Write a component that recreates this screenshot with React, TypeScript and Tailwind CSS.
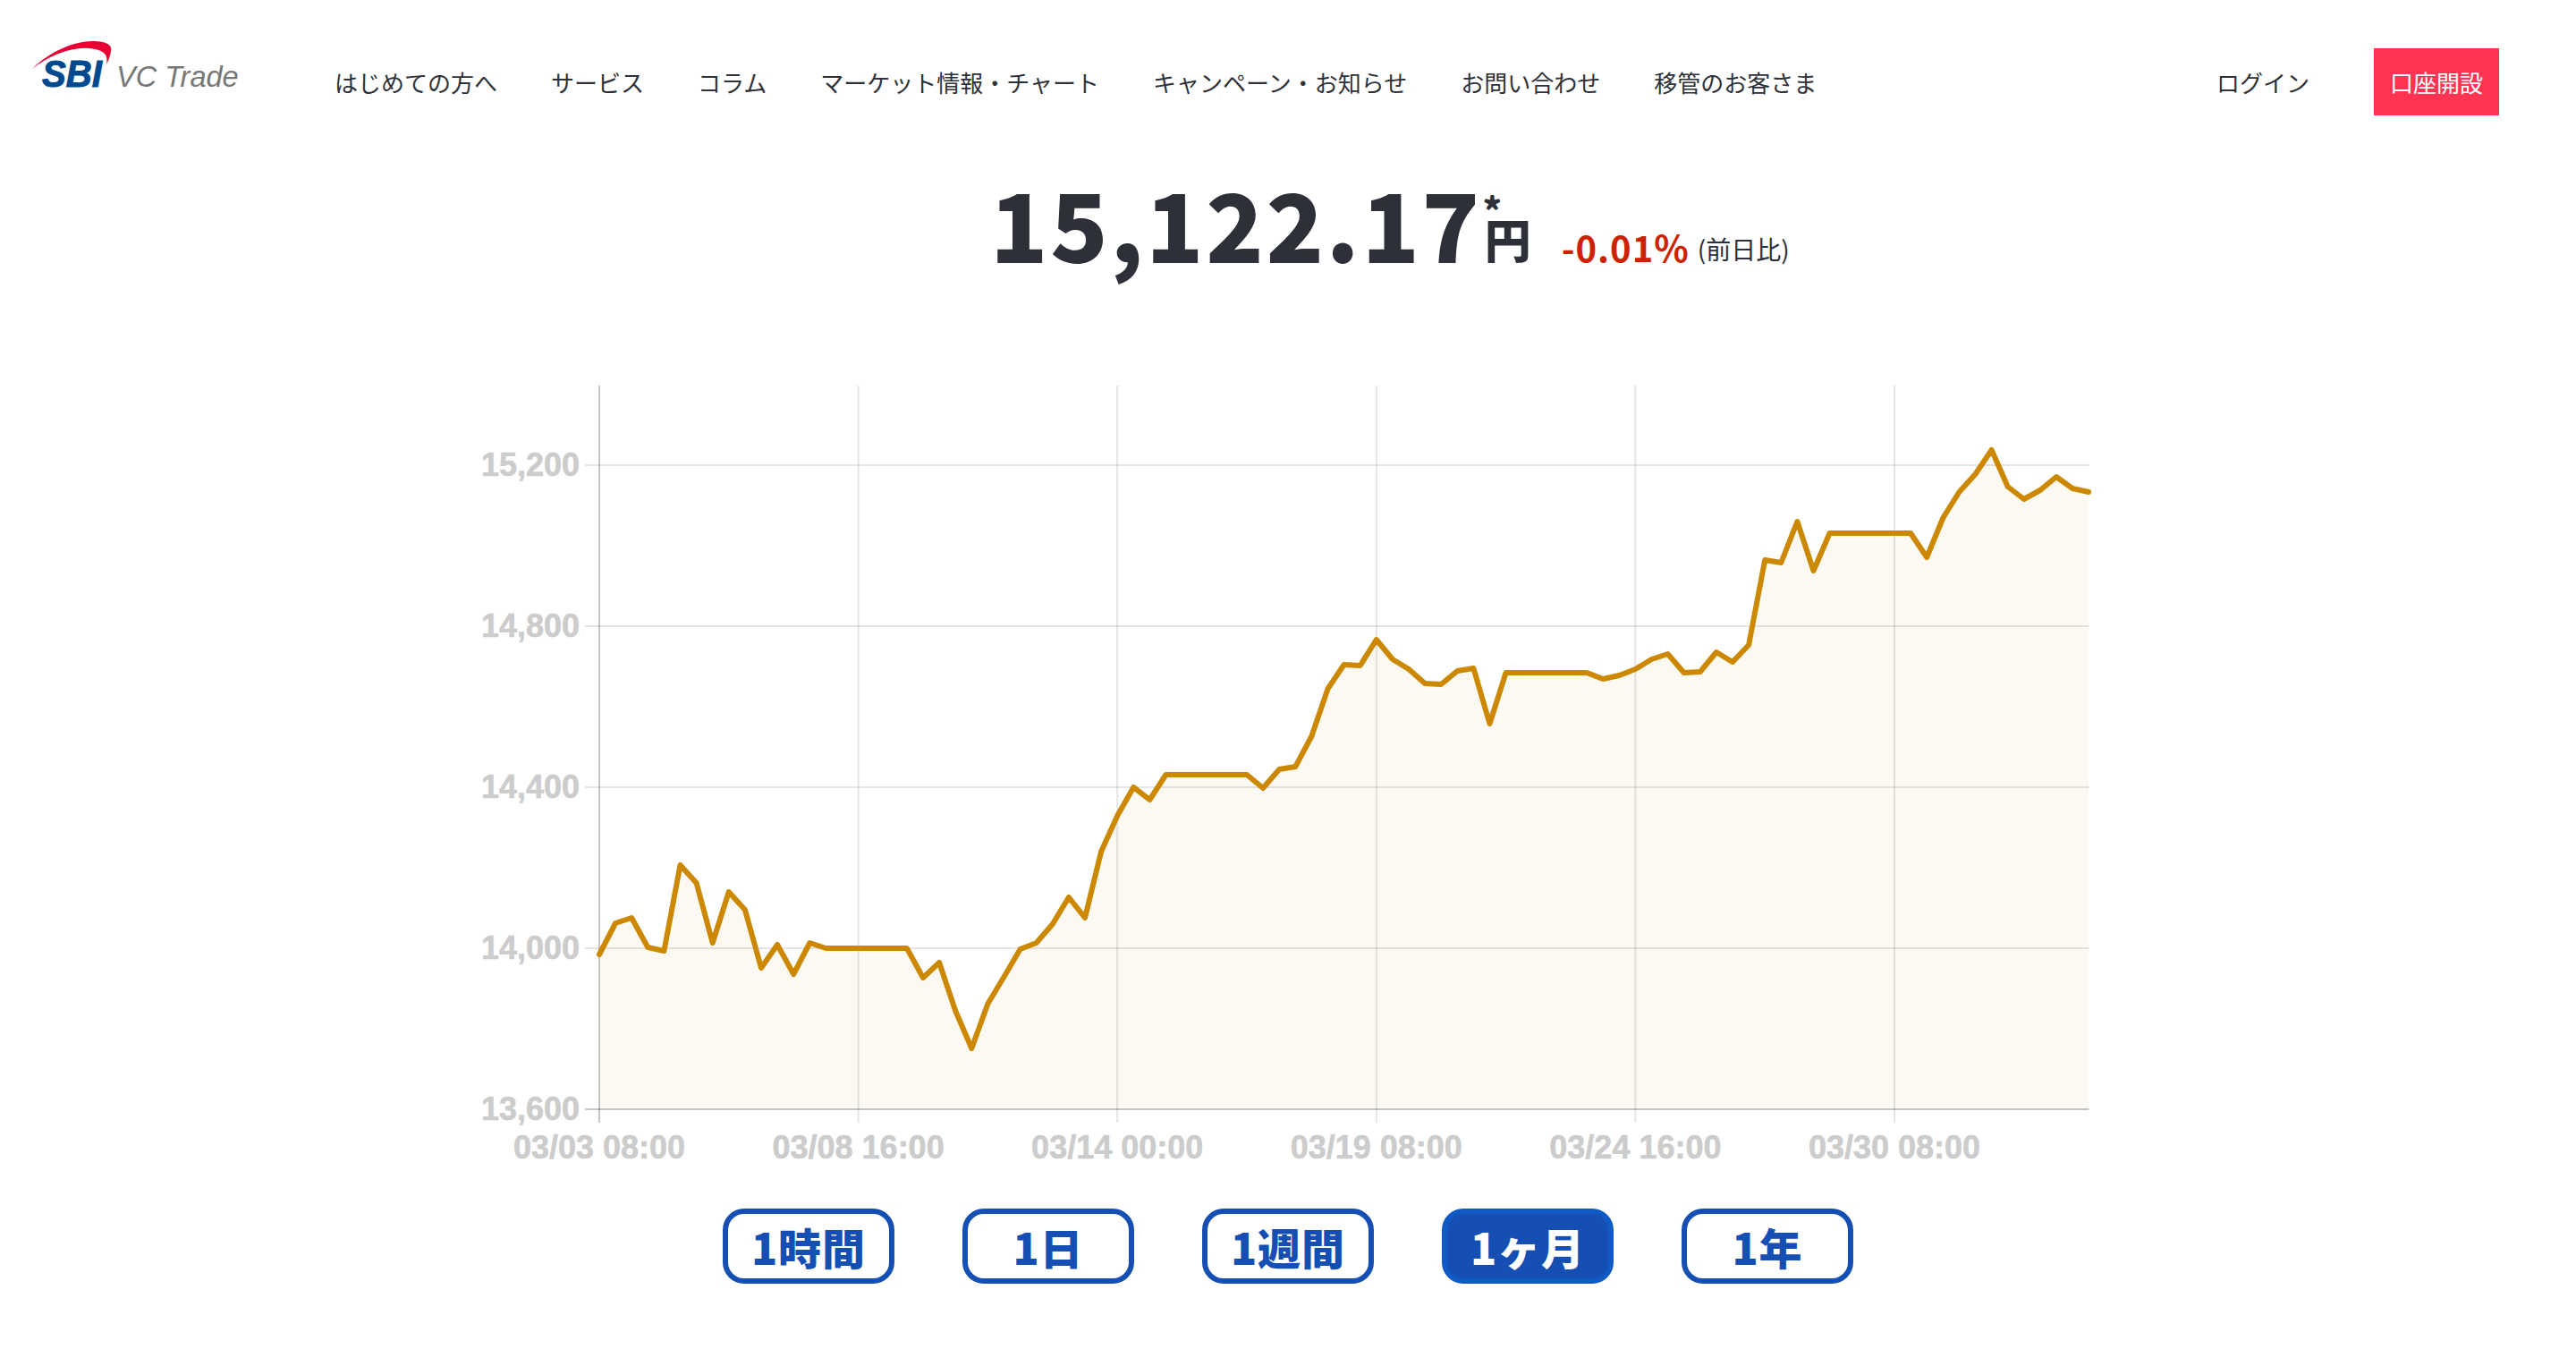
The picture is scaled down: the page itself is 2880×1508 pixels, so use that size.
const NAV_ITEMS = ['はじめての方へ', 'サービス', 'コラム', 'マーケット情報・チャート', 'キャンペーン・お知らせ', 'お問い合わせ', '移管のお客さま']

const RANGES = ['1時間', '1日', '1週間', '1ヶ月', '1年']

// y position of every sample, measured on the page (one sample every 18.1px)
const SAMPLES = [
  1067, 1032, 1026, 1059, 1063, 967, 987, 1054, 997, 1017, 1082, 1056, 1089, 1054, 1060, 1060,
  1060, 1060, 1060, 1060, 1093, 1076, 1130, 1172, 1122, 1092, 1061, 1054, 1033, 1003, 1026, 952,
  912, 880, 894, 866, 866, 866, 866, 866, 866, 881, 860, 857, 823, 770, 743, 744,
  715, 737, 748, 764, 765, 750, 747, 809, 752, 752, 752, 752, 752, 752, 759, 755,
  748, 737, 731, 752, 751, 729, 740, 721, 626, 629, 583, 638, 596, 596, 596, 596,
  596, 596, 623, 579, 550, 530, 503, 544, 558, 548, 533, 546, 550,
]

const CHART_TOP = 425
const CHART_LEFT = 130
const STEP = 18.1
const CHART_RIGHT = CHART_LEFT + STEP * 92
const BASE_Y = 1240 - CHART_TOP

const Y_TICKS = [
  { label: '15,200', y: 520 },
  { label: '14,800', y: 700 },
  { label: '14,400', y: 880 },
  { label: '14,000', y: 1060 },
  { label: '13,600', y: 1240 },
]

const X_TICKS = ['03/03 08:00', '03/08 16:00', '03/14 00:00', '03/19 08:00', '03/24 16:00', '03/30 08:00']

function Logo() {
  return (
    <svg width="290" height="120" viewBox="0 0 290 120" className="block">
      <path d="M36 77C55 58 82 46 104 46C119 46 126 50 124 58C123 63 121 68 119 72C121 62 118 56 100 54C80 52 55 62 36 77Z" fill="#e60033" />
      <text x="47" y="97" textLength="67" lengthAdjust="spacingAndGlyphs" className="font-['Liberation_Sans',sans-serif] font-bold italic text-[43px] fill-[#00498e] stroke-[#00498e] stroke-[1px]">SBI</text>
      <text x="130" y="97" className="font-['Liberation_Sans',sans-serif] italic text-[32.5px] fill-[#777777]">VC Trade</text>
    </svg>
  )
}

function PriceChart() {
  const points = SAMPLES.map((y, i) => `${(CHART_LEFT + i * STEP).toFixed(1)},${y - CHART_TOP}`).join(' ')
  const area = `${CHART_LEFT},${BASE_Y} ${points} ${CHART_RIGHT},${BASE_Y}`

  return (
    <svg width="1840" height="890" viewBox="-20 0 1840 890" className="block mx-auto">
      <polygon points={area} fill="#fcf9f3" />
      {Y_TICKS.map((tick) => (
        <g key={tick.label}>
          <line
            x1={114}
            x2={CHART_RIGHT}
            y1={tick.y - CHART_TOP}
            y2={tick.y - CHART_TOP}
            stroke={tick.y === 1240 ? 'rgba(0,0,0,0.22)' : 'rgba(0,0,0,0.1)'}
            strokeWidth="2"
          />
          <text x="108" y={tick.y - CHART_TOP + 12} textAnchor="end" className="font-['Liberation_Sans',sans-serif] font-bold text-[36px] fill-[#cccccc] stroke-[#cccccc] stroke-[0.6px]">
            {tick.label}
          </text>
        </g>
      ))}
      {X_TICKS.map((label, i) => {
        const x = CHART_LEFT + i * 289.6
        return (
          <g key={label}>
            <line x1={x} x2={x} y1={6} y2={830} stroke={i === 0 ? 'rgba(0,0,0,0.22)' : 'rgba(0,0,0,0.1)'} strokeWidth="2" />
            <text x={x} y={870} textAnchor="middle" className="font-['Liberation_Sans',sans-serif] font-bold text-[36px] fill-[#cccccc] stroke-[#cccccc] stroke-[0.6px]">
              {label}
            </text>
          </g>
        )
      })}
      <polyline points={points} fill="none" stroke="#cc8800" strokeWidth="6" strokeLinejoin="round" strokeLinecap="round" />
    </svg>
  )
}

export default function App() {
  return (
    <div className="min-h-[1508px] bg-white text-[#2e3138] font-['Noto_Sans_CJK_JP',sans-serif]">
      {/* Header */}
      <header className="flex items-center h-[183px]">
        <div className="w-[374px] shrink-0 self-start">
          <Logo />
        </div>
        <nav className="flex items-center gap-[60px] text-[26px] leading-none">
          {NAV_ITEMS.map((item) => (
            <span key={item} className="whitespace-nowrap">{item}</span>
          ))}
        </nav>
        <div className="ml-auto mr-[86px] flex items-center gap-[72px] text-[26px] leading-none">
          <span>ログイン</span>
          <span className="flex items-center justify-center w-[140px] h-[75px] bg-[#ff3352] text-white">口座開設</span>
        </div>
      </header>

      {/* Current price */}
      <div className="flex items-baseline pl-[1107px] h-[242px] text-[#2d3038]">
        <span className="text-[106px] leading-[130px] font-black tracking-[2.6px]">15,122.17</span>
        <span className="relative ml-[3px] -translate-y-[5px] text-[52px] leading-none font-black">
          円
          <span className="absolute left-[-2px] top-[-14px] text-[40px] leading-[14px]">*</span>
        </span>
        <span className="ml-[34px] -translate-y-[1px] text-[40px] leading-none font-bold text-[#cc2200] tracking-[1px]">-0.01%</span>
        <span className="ml-[9px] -translate-y-[4px] text-[28px] leading-none">(前日比)</span>
      </div>

      <PriceChart />

      {/* Range buttons */}
      <div className="flex justify-center gap-[76px] mt-[36px]">
        {RANGES.map((range) =>
          range === '1ヶ月' ? (
            <button key={range} className="w-[192px] h-[84px] rounded-[24px] border-[6px] border-[#0f5ac4] bg-[#154fb3] text-white text-[48px] leading-none font-black tracking-[1px]">
              {range}
            </button>
          ) : (
            <button key={range} className="w-[192px] h-[84px] rounded-[24px] border-[6px] border-[#154fb3] bg-white text-[#154fb3] text-[48px] leading-none font-black tracking-[1px]">
              {range}
            </button>
          ),
        )}
      </div>
    </div>
  )
}
